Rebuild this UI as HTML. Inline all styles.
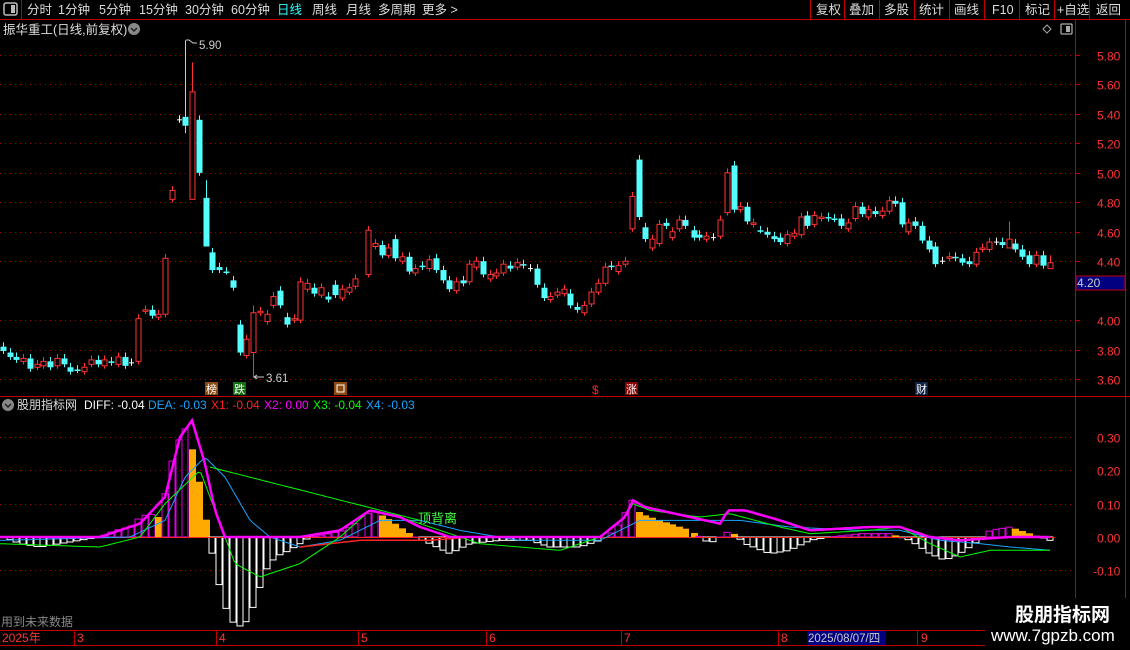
<!DOCTYPE html>
<html><head><meta charset="utf-8">
<style>
body{margin:0;background:#000;width:1130px;height:650px;overflow:hidden;font-family:"Liberation Sans","Noto Sans CJK SC",sans-serif;}
svg{position:absolute;left:0;top:0}
</style></head><body>
<svg id="s" width="1130" height="650" xmlns="http://www.w3.org/2000/svg" font-family="Liberation Sans, Noto Sans CJK SC, sans-serif">
<rect width="1130" height="650" fill="#000"/>
<line x1="0" y1="19.5" x2="1130" y2="19.5" stroke="#c00000"/>
<line x1="21.5" y1="0" x2="21.5" y2="19" stroke="#c00000"/>
<rect x="4" y="3" width="13" height="12" rx="2" fill="none" stroke="#bbb" stroke-width="1.5"/>
<rect x="11" y="5" width="4" height="8" fill="#bbb"/>
<g font-size="12.5" fill="#ddd">
<text x="27" y="14">分时</text><text x="58" y="14">1分钟</text><text x="99" y="14">5分钟</text><text x="139" y="14">15分钟</text><text x="185" y="14">30分钟</text><text x="231" y="14">60分钟</text>
<text x="277" y="14" fill="#3ff">日线</text><text x="312" y="14">周线</text><text x="346" y="14">月线</text><text x="378" y="14">多周期</text><text x="422" y="14">更多 &gt;</text>
<text x="816" y="14">复权</text><text x="849" y="14">叠加</text><text x="884" y="14">多股</text><text x="919" y="14">统计</text><text x="954" y="14">画线</text><text x="992" y="14">F10</text><text x="1025" y="14">标记</text><text x="1057" y="14">+自选</text><text x="1096" y="14">返回</text>
</g>
<g stroke="#c00000"><line x1="810.5" y1="0" x2="810.5" y2="19"/><line x1="844.5" y1="0" x2="844.5" y2="19"/><line x1="879.5" y1="0" x2="879.5" y2="19"/><line x1="914.5" y1="0" x2="914.5" y2="19"/><line x1="949.5" y1="0" x2="949.5" y2="19"/><line x1="984.5" y1="0" x2="984.5" y2="19"/><line x1="1019.5" y1="0" x2="1019.5" y2="19"/><line x1="1054.5" y1="0" x2="1054.5" y2="19"/><line x1="1089.5" y1="0" x2="1089.5" y2="19"/></g>
<text x="3" y="34" font-size="12.5" fill="#ddd">振华重工(日线,前复权)</text>
<circle cx="134" cy="29" r="6" fill="#888"/><path d="M131 28l3 3 3-3" stroke="#222" stroke-width="1.5" fill="none"/>
<path d="M1047 25l4 4-4 4-4-4z" fill="none" stroke="#aaa"/>
<rect x="1061" y="24" width="11" height="10" rx="1" fill="none" stroke="#aaa" stroke-width="1.3"/><rect x="1066" y="26" width="4" height="6" fill="#aaa"/>
<line x1="1075.5" y1="20" x2="1075.5" y2="630" stroke="#c00000"/>
<line x1="1125.5" y1="20" x2="1125.5" y2="630" stroke="#c00000"/>
<line x1="0" y1="396.5" x2="1130" y2="396.5" stroke="#c00000"/>
<line x1="0" y1="630.5" x2="985" y2="630.5" stroke="#c00000"/>
<line x1="0" y1="645.5" x2="985" y2="645.5" stroke="#c00000"/>
<g id="grid"></g>
<g id="c"></g>
<g id="m"></g>
<rect x="205" y="382" width="13" height="13" fill="#8a4a10"/><text x="206" y="393" font-size="11" fill="#fff">榜</text>
<rect x="233" y="382" width="13" height="13" fill="#107010"/><text x="234" y="393" font-size="11" fill="#fff">跌</text>
<rect x="334" y="382" width="13" height="13" fill="#8a4a10"/><rect x="337" y="385" width="7" height="7" fill="none" stroke="#fff"/>
<text x="592" y="394" font-size="12" fill="#f22">$</text>
<rect x="625" y="382" width="13" height="13" fill="#800"/><text x="626" y="393" font-size="11" fill="#fff">涨</text>
<rect x="915" y="382" width="13" height="13" fill="#124"/><text x="916" y="393" font-size="11" fill="#fff">财</text>
<text x="199" y="49" font-size="11.5" fill="#ccc">5.90</text><path d="M186 40h3l4 3h4" stroke="#ccc" fill="none"/>
<text x="266" y="382" font-size="11.5" fill="#ccc">3.61</text><path d="M254 377h10M254 377l3-2M254 377l3 2" stroke="#ccc" fill="none"/>
<rect x="1076" y="276" width="49" height="14" fill="#000080" stroke="#c00000"/><text x="1077" y="287" font-size="12" fill="#ccc">4.20</text>
<circle cx="8" cy="405" r="6" fill="#888"/><path d="M5 404l3 3 3-3" stroke="#222" stroke-width="1.5" fill="none"/>
<g font-size="12"><text x="17" y="409" fill="#ddd">股朋指标网</text><text x="84" y="409" fill="#fff">DIFF: -0.04</text><text x="148" y="409" fill="#19a5ff">DEA: -0.03</text><text x="211" y="409" fill="#f22">X1: -0.04</text><text x="264" y="409" fill="#f0f">X2: 0.00</text><text x="313" y="409" fill="#0f0">X3: -0.04</text><text x="366" y="409" fill="#19a5ff">X4: -0.03</text></g>
<text x="1" y="626" font-size="12" fill="#888">用到未来数据</text>
<g font-size="12" fill="#f33"><text x="2" y="642">2025年</text><text x="77" y="642">3</text><text x="219" y="642">4</text><text x="361" y="642">5</text><text x="489" y="642">6</text><text x="624" y="642">7</text><text x="781" y="642">8</text><text x="921" y="642">9</text></g>
<g stroke="#c00000"><line x1="74.5" y1="630" x2="74.5" y2="645"/><line x1="216.5" y1="630" x2="216.5" y2="645"/><line x1="358.5" y1="630" x2="358.5" y2="645"/><line x1="486.5" y1="630" x2="486.5" y2="645"/><line x1="621.5" y1="630" x2="621.5" y2="645"/><line x1="778.5" y1="630" x2="778.5" y2="645"/><line x1="917.5" y1="630" x2="917.5" y2="645"/></g>
<rect x="807" y="631" width="79" height="14" fill="#000080"/><text x="808" y="642" font-size="11.5" fill="#ccc">2025/08/07/四</text>
<rect x="985" y="598" width="145" height="52" fill="#000"/>
<text x="1015" y="621" font-size="19" font-weight="bold" fill="#fff">股朋指标网</text>
<text x="991" y="641" font-size="17" fill="#fff">www.7gpzb.com</text>
<text x="418" y="523" font-size="13" fill="#4f4">顶背离</text>
</svg>
<script>
var NS="http://www.w3.org/2000/svg";
function el(p,t,a){var e=document.createElementNS(NS,t);for(var k in a)e.setAttribute(k,a[k]);p.appendChild(e);return e;}
var G=document.getElementById('grid'),C=document.getElementById('c'),M=document.getElementById('m');
function py(p){return 55+(5.8-p)*147.3;}
function my(v){return 537-v*333;}
var labs=[5.8,5.6,5.4,5.2,5.0,4.8,4.6,4.4,4.0,3.8,3.6];
labs.forEach(function(p){var y=Math.round(py(p))+0.5;el(G,'line',{x1:0,y1:y,x2:1075,y2:y,stroke:'#a00000','stroke-dasharray':'1 4'});
 el(G,'line',{x1:1075,y1:y,x2:1080,y2:y,stroke:'#c00000'});
 var t=el(G,'text',{x:1097,y:y+5,'font-size':12,fill:'#f33'});t.textContent=p.toFixed(2);});
[0.3,0.2,0.1,0,-0.1].forEach(function(v){var y=Math.round(my(v))+0.5;if(v!=0)el(G,'line',{x1:0,y1:y,x2:1075,y2:y,stroke:'#a00000','stroke-dasharray':'1 4'});
 var t=el(G,'text',{x:v<0?1093:1097,y:y+5,'font-size':12,fill:'#f33'});t.textContent=v.toFixed(2);});
var d=[[3,3.82,3.79],[10,3.78,3.75],[16,3.75,3.73],[23,3.72,3.74],[30,3.74,3.67],[37,3.68,3.70],[43,3.69,3.72],[50,3.72,3.68],[57,3.69,3.74],[64,3.74,3.70],[70,3.68,3.65],[77,3.665,3.66],[84,3.65,3.68],[91,3.70,3.73],[98,3.73,3.70],[104,3.69,3.73],[111,3.72,3.71],[118,3.70,3.75],[125,3.75,3.69],[131,3.71,3.71,1],[138,3.72,4.01],[145,4.06,4.07],[152,4.07,4.03],[158,4.02,4.04],[165,4.04,4.42],[172,4.82,4.88],[179,5.36,5.36,1],[185,5.38,5.32,0,5.90,5.27],[192,4.82,5.55,0,5.75,4.82],[199,5.36,5.0],[206,4.83,4.50,0,4.95,4.50],[212,4.46,4.34],[219,4.36,4.34],[226,4.33,4.33],[233,4.27,4.22],[240,3.97,3.78],[246,3.76,3.87],[253,3.78,4.05,0,4.10,3.61],[260,4.05,4.06],[267,3.99,4.04],[273,4.10,4.16],[280,4.20,4.10],[287,4.02,3.97],[294,4.0,4.01],[300,4.0,4.26],[307,4.21,4.25],[314,4.22,4.18],[321,4.17,4.22],[328,4.16,4.14],[335,4.24,4.17],[342,4.15,4.21],[349,4.19,4.22],[355,4.23,4.28],[368,4.31,4.61],
[375,4.50,4.52],[382,4.51,4.44],[388,4.44,4.49],[395,4.55,4.42],[402,4.40,4.43],[409,4.43,4.33],[415,4.32,4.35],[422,4.37,4.36],[429,4.35,4.41],[436,4.42,4.34],[443,4.34,4.27],[449,4.27,4.21],[456,4.20,4.26],[463,4.27,4.25],[469,4.26,4.38],[476,4.36,4.40],[483,4.40,4.31],[490,4.28,4.31],[496,4.30,4.32],[503,4.32,4.38],[510,4.37,4.35],[517,4.36,4.39],[523,4.38,4.37],[530,4.35,4.35,1],[537,4.35,4.24],[544,4.22,4.15],[550,4.14,4.16],[557,4.17,4.19],[564,4.18,4.21],[570,4.18,4.10],[577,4.09,4.07],[584,4.05,4.10],[591,4.11,4.19],[598,4.19,4.25],[605,4.25,4.36],[611,4.37,4.36],[618,4.33,4.37],[625,4.38,4.40],[632,4.62,4.84],[639,5.09,4.70],[645,4.63,4.55],[652,4.49,4.55],[659,4.52,4.65],[666,4.66,4.64],[672,4.56,4.60],[679,4.62,4.68],[685,4.68,4.64],
[694,4.61,4.56],[699,4.58,4.56],[706,4.55,4.57],[713,4.56,4.56,1],[720,4.57,4.68],[727,4.73,5.0],[734,5.05,4.75],[740,4.75,4.77],[747,4.77,4.67],[753,4.65,4.66],[760,4.61,4.61],[767,4.60,4.58],[774,4.57,4.55],[780,4.56,4.53],[787,4.52,4.58],[794,4.57,4.59],[801,4.58,4.70],[807,4.71,4.64],[814,4.65,4.71],[821,4.69,4.70],[828,4.70,4.69],[834,4.69,4.685],[841,4.69,4.64],[848,4.62,4.66],[855,4.69,4.77],[862,4.77,4.72],[868,4.70,4.75],[875,4.74,4.72],[882,4.71,4.74],[889,4.74,4.81],[895,4.81,4.79],[902,4.80,4.65],[908,4.60,4.66],[915,4.67,4.64],[922,4.64,4.54],[929,4.54,4.48],[935,4.50,4.38],[942,4.40,4.40,1],[949,4.42,4.43],[955,4.43,4.42],[962,4.42,4.39],[969,4.40,4.38],[976,4.38,4.46],[982,4.48,4.49],[989,4.48,4.53],[996,4.53,4.53,1],[1002,4.53,4.51],[1009,4.49,4.55,0,4.67,4.49],[1015,4.52,4.48],[1022,4.48,4.43],[1029,4.44,4.38],[1036,4.38,4.44],[1043,4.44,4.37],[1050,4.35,4.39,0,4.44,4.35]];
d.forEach(function(b){var x=b[0],o=b[1],c=b[2];var hi=b[4]||Math.max(o,c)+0.03,lo=b[5]||Math.min(o,c)-0.02;
 var col=b[3]?'#fff':(c>o?'#ff3232':'#54ffff');
 el(C,'line',{x1:x+0.5,y1:py(hi),x2:x+0.5,y2:py(lo),stroke:col});
 var t=py(Math.max(o,c)),bt=py(Math.min(o,c));if(bt-t<1.5)bt=t+1.5;
 if(b[3]){el(C,'line',{x1:x-2,y1:t,x2:x+3,y2:t,stroke:col});}
 else if(c>o)el(C,'rect',{x:x-2,y:t,width:5,height:bt-t,fill:'#000',stroke:col});
 else el(C,'rect',{x:x-2.5,y:t,width:6,height:bt-t,fill:col});});
function interp(k,x){for(var i=0;i<k.length-1;i++){if(x>=k[i][0]&&x<=k[i+1][0]){var f=(x-k[i][0])/(k[i+1][0]-k[i][0]);return k[i][1]+f*(k[i+1][1]-k[i][1]);}}return k[k.length-1][1];}
var H=[[0,0.005],[20,-0.02],[40,-0.03],[60,-0.02],[100,0.0],[115,0.02],[130,0.03],[140,0.06],[150,0.07],[158,0.06],[165,0.13],[175,0.27],[186,0.33],[195,0.23],[205,0.07],[210,-0.02],[217,-0.12],[224,-0.20],[231,-0.25],[238,-0.27],[245,-0.26],[252,-0.22],[259,-0.16],[266,-0.10],[275,-0.06],[290,-0.04],[300,-0.02],[310,0.0],[330,0.01],[345,0.02],[360,0.05],[372,0.08],[385,0.06],[400,0.03],[415,0.0],[430,-0.02],[450,-0.05],[470,-0.02],[500,-0.01],[530,-0.01],[550,-0.03],[580,-0.03],[600,-0.01],[615,0.02],[632,0.11],[640,0.07],[660,0.05],[690,0.02],[710,-0.02],[730,0.02],[745,-0.02],[770,-0.05],[790,-0.04],[810,-0.01],[830,0.0],[860,0.01],[890,0.01],[910,-0.01],[930,-0.05],[945,-0.07],[960,-0.05],[975,-0.02],[990,0.02],[1010,0.03],[1030,0.01],[1050,-0.01]];
var prev=0;
d.forEach(function(b){var x=b[0],v=interp(H,x);var y0=537,y=my(v);
 if(v>=0){if(v<prev&&v>0.003)el(M,'rect',{x:x-3,y:y,width:7,height:y0-y,fill:'#ffaa00'});
  else el(M,'rect',{x:x-3,y:y,width:6,height:Math.max(y0-y,0.5),fill:'none',stroke:'#e000e0'});}
 else el(M,'rect',{x:x-3,y:y0,width:6,height:y-y0,fill:'none',stroke:'#fff'});
 prev=v;});
function line(k,col,w){var p='',a=k[0][0],z=k[k.length-1][0];for(var x=a;x<=z;x+=3){p+=(x==a?'M':'L')+x+' '+my(interp(k,x)).toFixed(1);}el(M,'path',{d:p,stroke:col,'stroke-width':w,fill:'none'});}
el(M,'line',{x1:0,y1:537.5,x2:1055,y2:537.5,stroke:'#f22'});
line([[0,-0.01],[130,0.0],[165,0.05],[185,0.18],[205,0.24],[225,0.18],[250,0.05],[270,0.0],[300,-0.03],[340,-0.01],[380,0.05],[420,0.05],[460,0.02],[520,-0.01],[600,-0.01],[640,0.05],[700,0.05],[740,0.05],[790,0.03],[860,0.02],[900,0.02],[940,-0.01],[980,-0.02],[1010,-0.03],[1051,-0.04]],'#19a5ff',1);
line([[300,-0.03],[330,-0.02],[360,-0.01],[400,-0.01],[430,-0.01],[470,0.0],[500,0.0]],'#f22',1.5);
line([[0,-0.02],[100,-0.03],[140,0.0],[165,0.1],[200,0.2],[215,0.08],[235,-0.08],[260,-0.12],[300,-0.08],[340,0.0],[370,0.08],[400,0.06],[440,0.02],[480,-0.02],[520,-0.03],[560,-0.04],[600,0.0],[625,0.06],[633,0.1],[650,0.08],[700,0.06],[730,0.07],[780,0.03],[810,0.01],[870,0.02],[900,0.03],[930,-0.02],[960,-0.06],[990,-0.04],[1051,-0.04]],'#0f0',1);
line([[210,0.21],[420,0.05]],'#0f0',1);
line([[0,0.0],[100,0.0],[140,0.04],[165,0.12],[180,0.30],[192,0.35],[205,0.22],[215,0.08],[225,-0.0],[300,0.0],[340,0.02],[370,0.08],[400,0.06],[420,0.03],[450,0.0],[600,0.0],[625,0.06],[633,0.11],[645,0.09],[690,0.06],[720,0.04],[728,0.08],[745,0.08],[780,0.05],[810,0.02],[870,0.03],[900,0.03],[930,0.0],[960,-0.01],[1010,0.0],[1051,0.0]],'#f0f',2.5);
</script>
</body></html>
